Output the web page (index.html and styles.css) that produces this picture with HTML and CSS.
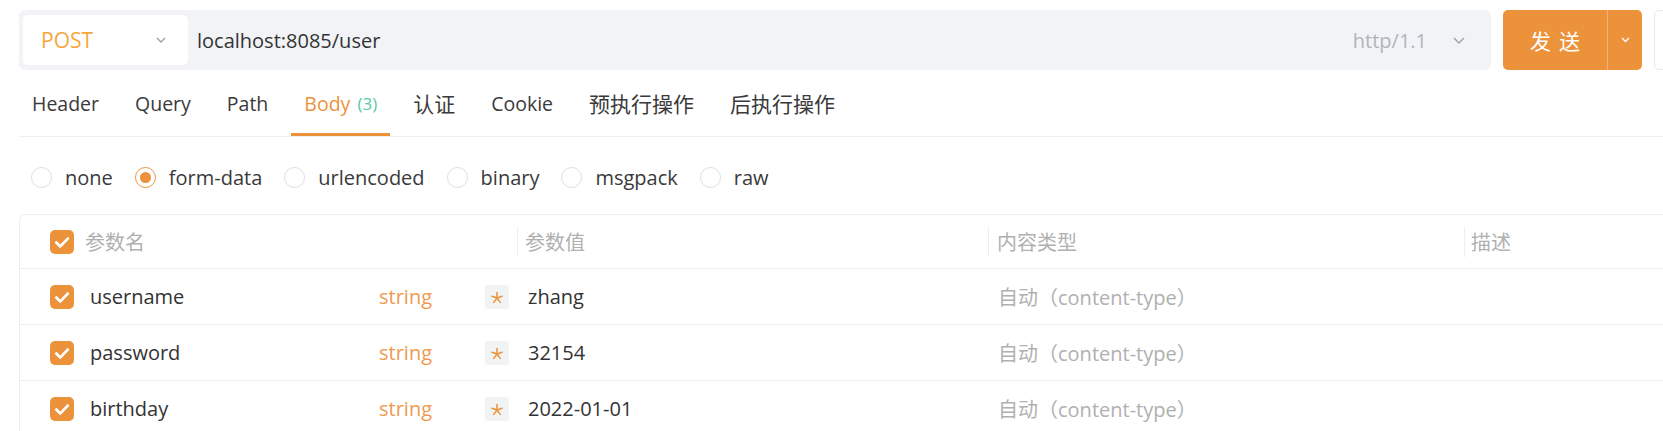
FILE: index.html
```html
<!DOCTYPE html>
<html lang="zh-CN">
<head>
<meta charset="utf-8">
<title>Request</title>
<link rel="stylesheet" href="styles.css">
</head>
<body>
<div class="page">
  <div class="topbar">
    <div class="urlbar">
      <div class="method">
        <span class="method-name">POST</span>
        <svg class="chev" width="10" height="6" viewBox="0 0 10 6"><polyline points="1,1 5,5 9,1" fill="none" stroke="#a0a0a0" stroke-width="1.3"/></svg>
      </div>
      <div class="url">localhost:8085/user</div>
      <div class="proto">http/1.1</div>
      <svg class="chev proto-chev" width="12" height="7" viewBox="0 0 12 7"><polyline points="1,1 6,6 11,1" fill="none" stroke="#a0a0a0" stroke-width="1.4"/></svg>
    </div>
    <div class="send">
      <div class="send-main">发送</div>
      <div class="send-drop">
        <svg width="9" height="6" viewBox="0 0 9 6"><polyline points="1,1 4.5,4.5 8,1" fill="none" stroke="#fff" stroke-width="1.4"/></svg>
      </div>
    </div>
    <div class="extra"></div>
  </div>

  <div class="tabs">
    <div class="tab">Header</div>
    <div class="tab">Query</div>
    <div class="tab">Path</div>
    <div class="tab active">Body <span class="count">(3)</span></div>
    <div class="tab cjk">认证</div>
    <div class="tab">Cookie</div>
    <div class="tab cjk">预执行操作</div>
    <div class="tab cjk">后执行操作</div>
  </div>

  <div class="radios">
    <label class="radio"><span class="dot"></span><span>none</span></label>
    <label class="radio on"><span class="dot"></span><span>form-data</span></label>
    <label class="radio"><span class="dot"></span><span>urlencoded</span></label>
    <label class="radio"><span class="dot"></span><span>binary</span></label>
    <label class="radio"><span class="dot"></span><span>msgpack</span></label>
    <label class="radio"><span class="dot"></span><span>raw</span></label>
  </div>

  <div class="table">
    <div class="row head">
      <div class="cell c1">
        <svg class="check" width="24" height="24" viewBox="0 0 24 24"><rect width="24" height="24" rx="5" fill="#eb923b"/><path d="M6.3 12.6 L10.3 16.4 L17.8 8.6" fill="none" stroke="#fff" stroke-width="2.8" stroke-linecap="round" stroke-linejoin="round"/></svg>
        <span class="htext first">参数名</span>
      </div>
      <div class="cell hc"><span class="htext">参数值</span></div>
      <div class="cell hc c3h"><span class="htext">内容类型</span></div>
      <div class="cell hc c4h"><span class="htext">描述</span></div>
    </div>

    <div class="row">
      <div class="cell c1">
        <svg class="check" width="24" height="24" viewBox="0 0 24 24"><rect width="24" height="24" rx="5" fill="#eb923b"/><path d="M6.3 12.6 L10.3 16.4 L17.8 8.6" fill="none" stroke="#fff" stroke-width="2.8" stroke-linecap="round" stroke-linejoin="round"/></svg>
        <span class="name">username</span>
        <span class="type">string</span>
        <span class="req"><svg width="24" height="24" viewBox="0 0 24 24"><g stroke="#eb923b" stroke-width="1.5" stroke-linecap="round"><line x1="12" y1="13" x2="12" y2="7.6"/><line x1="12" y1="13" x2="17.1" y2="11.3"/><line x1="12" y1="13" x2="15.2" y2="17.4"/><line x1="12" y1="13" x2="8.8" y2="17.4"/><line x1="12" y1="13" x2="6.9" y2="11.3"/></g></svg></span>
      </div>
      <div class="cell val">zhang</div>
      <div class="cell ctype">自动（content-type）</div>
      <div class="cell"></div>
    </div>

    <div class="row">
      <div class="cell c1">
        <svg class="check" width="24" height="24" viewBox="0 0 24 24"><rect width="24" height="24" rx="5" fill="#eb923b"/><path d="M6.3 12.6 L10.3 16.4 L17.8 8.6" fill="none" stroke="#fff" stroke-width="2.8" stroke-linecap="round" stroke-linejoin="round"/></svg>
        <span class="name">password</span>
        <span class="type">string</span>
        <span class="req"><svg width="24" height="24" viewBox="0 0 24 24"><g stroke="#eb923b" stroke-width="1.5" stroke-linecap="round"><line x1="12" y1="13" x2="12" y2="7.6"/><line x1="12" y1="13" x2="17.1" y2="11.3"/><line x1="12" y1="13" x2="15.2" y2="17.4"/><line x1="12" y1="13" x2="8.8" y2="17.4"/><line x1="12" y1="13" x2="6.9" y2="11.3"/></g></svg></span>
      </div>
      <div class="cell val">32154</div>
      <div class="cell ctype">自动（content-type）</div>
      <div class="cell"></div>
    </div>

    <div class="row">
      <div class="cell c1">
        <svg class="check" width="24" height="24" viewBox="0 0 24 24"><rect width="24" height="24" rx="5" fill="#eb923b"/><path d="M6.3 12.6 L10.3 16.4 L17.8 8.6" fill="none" stroke="#fff" stroke-width="2.8" stroke-linecap="round" stroke-linejoin="round"/></svg>
        <span class="name">birthday</span>
        <span class="type">string</span>
        <span class="req"><svg width="24" height="24" viewBox="0 0 24 24"><g stroke="#eb923b" stroke-width="1.5" stroke-linecap="round"><line x1="12" y1="13" x2="12" y2="7.6"/><line x1="12" y1="13" x2="17.1" y2="11.3"/><line x1="12" y1="13" x2="15.2" y2="17.4"/><line x1="12" y1="13" x2="8.8" y2="17.4"/><line x1="12" y1="13" x2="6.9" y2="11.3"/></g></svg></span>
      </div>
      <div class="cell val">2022-01-01</div>
      <div class="cell ctype">自动（content-type）</div>
      <div class="cell"></div>
    </div>
  </div>
</div>
</body>
</html>
```

FILE: styles.css
```css
* { box-sizing: border-box; }
html, body { margin: 0; padding: 0; background: #fff; }
body {
  overflow: hidden;
  font-family: "Open Sans", "Noto Sans CJK SC", sans-serif;
  font-size: 20px;
  color: #333;
}
.page {
  width: 1714px;
  padding: 10px 0 0 19px;
}

/* top bar */
.topbar {
  display: flex;
  height: 60px;
  gap: 12px;
}
.urlbar {
  flex: 1;
  display: flex;
  align-items: center;
  background: #f2f3f7;
  border-radius: 6px;
  padding: 0 26px 0 4px;
}
.method {
  width: 165px;
  height: 50px;
  background: #fff;
  border-radius: 5px;
  display: flex;
  align-items: center;
  justify-content: space-between;
  padding: 0 22px 0 18px;
}
.method-name {
  color: #f5a73c;
  font-size: 21px;
}
.url {
  flex: 1;
  margin-left: 9px;
  color: #333;
}
.proto { color: #b1b4ba; }
.proto-chev { margin-left: 26px; }
.send {
  width: 139px;
  display: flex;
  background: #eb923b;
  border-radius: 5px;
  color: #fff;
}
.send-main {
  width: 104px;
  display: flex;
  align-items: center;
  justify-content: center;
  letter-spacing: 8px;
  padding-left: 8px;
  font-size: 21px;
  font-family: "Noto Sans CJK SC", sans-serif;
}
.send-drop {
  flex: 1;
  display: flex;
  align-items: center;
  justify-content: center;
  border-left: 1px solid #f2b276;
}
.extra {
  width: 60px;
  border: 1px solid #e9e9e9;
  border-radius: 5px;
  background: #fff;
}

/* tabs */
.tabs {
  display: flex;
  height: 67px;
  gap: 10px;
  border-bottom: 1px solid #eeeeee;
}
.tab {
  position: relative;
  display: flex;
  align-items: center;
  padding: 0 13px;
  color: #3a3a3a;
  white-space: pre;
  font-size: 19.5px;
}
.tab.cjk {
  font-family: "Noto Sans CJK SC", sans-serif;
  font-size: 21px;
}
.tab.active { color: #eb923b; }
.tab.active::after {
  content: "";
  position: absolute;
  left: 0;
  right: 0;
  bottom: 0;
  height: 3px;
  background: #eb923b;
}
.count {
  color: #58c9a5;
  font-size: 17px;
  margin-left: 2px;
}

/* radios */
.radios {
  display: flex;
  align-items: center;
  height: 77px;
  padding: 4px 0 0 12px;
}
.radio {
  display: flex;
  align-items: center;
  gap: 13px;
  margin-right: 22px;
  color: #3a3a3a;
  font-size: 20px;
}
.dot {
  width: 21px;
  height: 21px;
  border-radius: 50%;
  border: 1px solid #dedede;
  display: flex;
  align-items: center;
  justify-content: center;
}
.radio.on .dot { border-color: #eb923b; }
.radio.on .dot::after {
  content: "";
  width: 11px;
  height: 11px;
  border-radius: 50%;
  background: #eb923b;
}

/* table */
.table {
  border-top: 1px solid #eeeeee;
  border-left: 1px solid #eeeeee;
  border-top-left-radius: 6px;
}
.row {
  display: grid;
  grid-template-columns: 497px 471px 476px 1fr;
  height: 56px;
  border-bottom: 1px solid #eeeeee;
}
.row.head { height: 54px; }
.cell {
  display: flex;
  align-items: center;
  position: relative;
}
.c1 { padding-left: 30px; }
.check { flex: none; }
.htext {
  color: #b0b0b0;
  font-family: "Noto Sans CJK SC", sans-serif;
}
.htext.first { margin-left: 11px; }
.hc { padding-left: 8px; }
.c3h { padding-left: 9px; }
.c4h { padding-left: 7px; }
.hc::before {
  content: "";
  position: absolute;
  left: 0;
  top: 12px;
  height: 30px;
  width: 1px;
  background: #eeeeee;
}
.name {
  width: 289px;
  margin-left: 16px;
  color: #333;
}
.type {
  width: 106px;
  color: #ee9a52;
}
.req {
  width: 24px;
  height: 24px;
  background: #f2f3f5;
  border-radius: 3px;
  display: flex;
}
.val { padding-left: 11px; color: #333; }
.ctype {
  padding-left: 10px;
  color: #b0b0b0;
}
```
